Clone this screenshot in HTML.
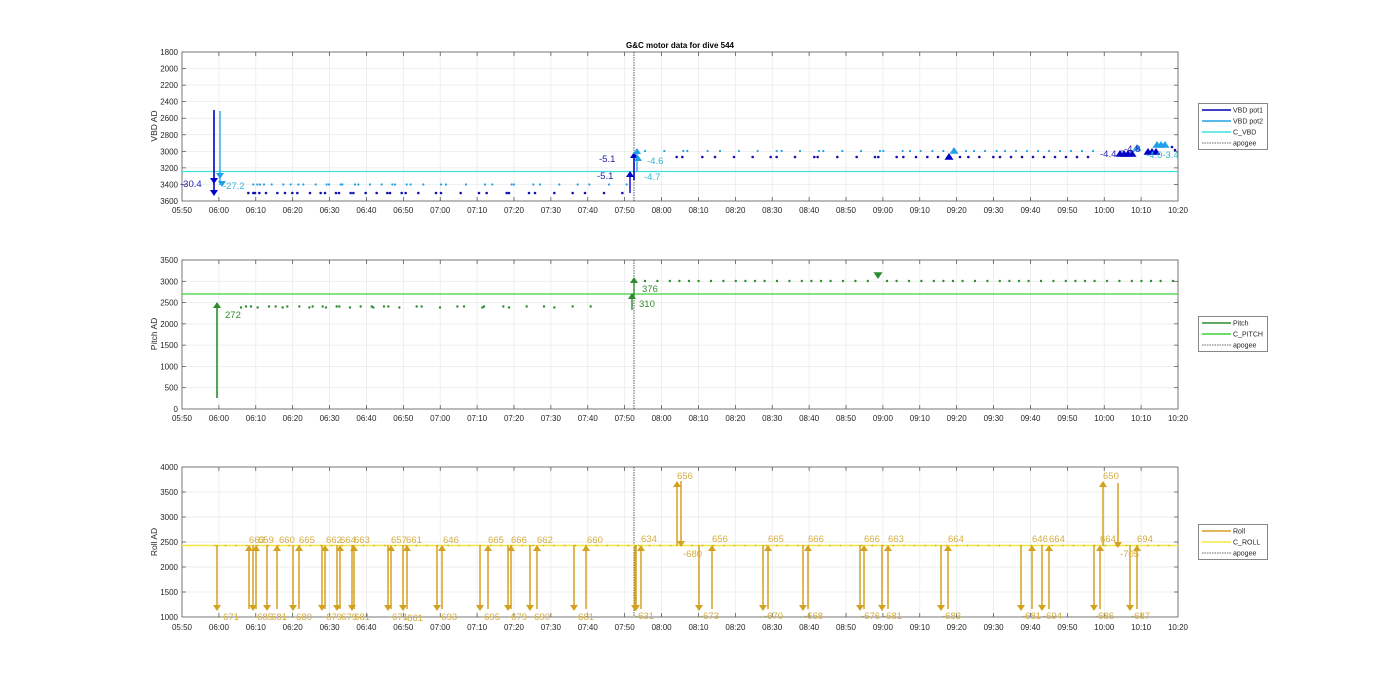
<!DOCTYPE html>
<html><head><meta charset="utf-8"><style>
html,body{margin:0;padding:0;background:#fff;width:1400px;height:693px;overflow:hidden}
svg{display:block;font-family:"Liberation Sans",Arial,sans-serif}
</style></head><body>
<svg id="s" width="1400" height="693" viewBox="0 0 1400 693" xmlns="http://www.w3.org/2000/svg">
<g id="g"></g>
<text x="680" y="48" font-size="8" font-weight="bold" text-anchor="middle" fill="#000">G&amp;C motor data for dive 544</text>
<g font-size="8" fill="#262626" text-anchor="middle">
<text y="213"><tspan x="182">05:50</tspan><tspan x="218.9">06:00</tspan><tspan x="255.8">06:10</tspan><tspan x="292.7">06:20</tspan><tspan x="329.6">06:30</tspan><tspan x="366.4">06:40</tspan><tspan x="403.3">06:50</tspan><tspan x="440.2">07:00</tspan><tspan x="477.1">07:10</tspan><tspan x="514">07:20</tspan><tspan x="550.9">07:30</tspan><tspan x="587.8">07:40</tspan><tspan x="624.7">07:50</tspan><tspan x="661.6">08:00</tspan><tspan x="698.5">08:10</tspan><tspan x="735.4">08:20</tspan><tspan x="772.2">08:30</tspan><tspan x="809.1">08:40</tspan><tspan x="846">08:50</tspan><tspan x="882.9">09:00</tspan><tspan x="919.8">09:10</tspan><tspan x="956.7">09:20</tspan><tspan x="993.6">09:30</tspan><tspan x="1030.5">09:40</tspan><tspan x="1067.4">09:50</tspan><tspan x="1104.3">10:00</tspan><tspan x="1141.1">10:10</tspan><tspan x="1178">10:20</tspan></text>
<text y="421"><tspan x="182">05:50</tspan><tspan x="218.9">06:00</tspan><tspan x="255.8">06:10</tspan><tspan x="292.7">06:20</tspan><tspan x="329.6">06:30</tspan><tspan x="366.4">06:40</tspan><tspan x="403.3">06:50</tspan><tspan x="440.2">07:00</tspan><tspan x="477.1">07:10</tspan><tspan x="514">07:20</tspan><tspan x="550.9">07:30</tspan><tspan x="587.8">07:40</tspan><tspan x="624.7">07:50</tspan><tspan x="661.6">08:00</tspan><tspan x="698.5">08:10</tspan><tspan x="735.4">08:20</tspan><tspan x="772.2">08:30</tspan><tspan x="809.1">08:40</tspan><tspan x="846">08:50</tspan><tspan x="882.9">09:00</tspan><tspan x="919.8">09:10</tspan><tspan x="956.7">09:20</tspan><tspan x="993.6">09:30</tspan><tspan x="1030.5">09:40</tspan><tspan x="1067.4">09:50</tspan><tspan x="1104.3">10:00</tspan><tspan x="1141.1">10:10</tspan><tspan x="1178">10:20</tspan></text>
<text y="630"><tspan x="182">05:50</tspan><tspan x="218.9">06:00</tspan><tspan x="255.8">06:10</tspan><tspan x="292.7">06:20</tspan><tspan x="329.6">06:30</tspan><tspan x="366.4">06:40</tspan><tspan x="403.3">06:50</tspan><tspan x="440.2">07:00</tspan><tspan x="477.1">07:10</tspan><tspan x="514">07:20</tspan><tspan x="550.9">07:30</tspan><tspan x="587.8">07:40</tspan><tspan x="624.7">07:50</tspan><tspan x="661.6">08:00</tspan><tspan x="698.5">08:10</tspan><tspan x="735.4">08:20</tspan><tspan x="772.2">08:30</tspan><tspan x="809.1">08:40</tspan><tspan x="846">08:50</tspan><tspan x="882.9">09:00</tspan><tspan x="919.8">09:10</tspan><tspan x="956.7">09:20</tspan><tspan x="993.6">09:30</tspan><tspan x="1030.5">09:40</tspan><tspan x="1067.4">09:50</tspan><tspan x="1104.3">10:00</tspan><tspan x="1141.1">10:10</tspan><tspan x="1178">10:20</tspan></text>
</g>
<g font-size="8" fill="#262626" text-anchor="end">
<text x="178" y="55">1800</text><text x="178" y="71.6">2000</text><text x="178" y="88.1">2200</text><text x="178" y="104.7">2400</text><text x="178" y="121.2">2600</text><text x="178" y="137.8">2800</text><text x="178" y="154.3">3000</text><text x="178" y="170.9">3200</text><text x="178" y="187.4">3400</text><text x="178" y="204">3600</text>
<text x="178" y="263">3500</text><text x="178" y="284.3">3000</text><text x="178" y="305.6">2500</text><text x="178" y="326.9">2000</text><text x="178" y="348.1">1500</text><text x="178" y="369.4">1000</text><text x="178" y="390.7">500</text><text x="178" y="412">0</text>
<text x="178" y="470">4000</text><text x="178" y="495">3500</text><text x="178" y="520">3000</text><text x="178" y="545">2500</text><text x="178" y="570">2000</text><text x="178" y="595">1500</text><text x="178" y="620">1000</text>
</g>
<g font-size="8.5" fill="#262626" text-anchor="middle">
<text transform="translate(157,126) rotate(-90)">VBD AD</text>
<text transform="translate(157,334) rotate(-90)">Pitch AD</text>
<text transform="translate(157,542) rotate(-90)">Roll AD</text>
</g>
<g font-size="9.5">
<text x="180" y="187" fill="#2020b0">-30.4</text>
<text x="223" y="189" fill="#30b8d8">-27.2</text>
<text x="599" y="162" fill="#2020b0">-5.1</text>
<text x="597" y="179" fill="#2020b0">-5.1</text>
<text x="647" y="164" fill="#30b8d8">-4.6</text>
<text x="644" y="180" fill="#30b8d8">-4.7</text>
<text x="1100" y="157" fill="#2020b0">-4.4-3.7</text>
<text x="1124" y="152" fill="#2020b0">-4.8</text>
<text x="1146" y="158" fill="#30b8d8">-4.0-3.4</text>
</g>
<g font-size="9.5" fill="#2e8b2e">
<text x="225" y="318">272</text><text x="642" y="292">376</text><text x="639" y="307">310</text>
</g>
<g font-size="9.5" fill="#d4ac40">
<text x="249" y="543">663</text><text x="258" y="543">659</text><text x="279" y="543">660</text><text x="299" y="543">665</text><text x="326" y="543">662</text><text x="340" y="543">664</text><text x="354" y="543">663</text><text x="391" y="543">657</text><text x="406" y="543">661</text><text x="443" y="543">646</text><text x="488" y="543">665</text><text x="511" y="543">666</text><text x="537" y="543">662</text><text x="587" y="543">660</text>
<text x="220" y="620">-671</text><text x="254" y="620">-685</text><text x="268" y="620">-681</text><text x="293" y="620">-680</text><text x="323" y="620">-679</text><text x="338" y="620">-679</text><text x="351" y="620">-681</text><text x="389" y="620">-671</text><text x="404" y="621">-661</text><text x="438" y="620">-693</text><text x="481" y="620">-695</text><text x="508" y="620">-679</text><text x="531" y="620">-690</text><text x="575" y="620">-681</text>
<text x="641" y="542">634</text><text x="712" y="542">656</text><text x="768" y="542">665</text><text x="808" y="542">666</text><text x="864" y="542">666</text><text x="888" y="542">663</text><text x="948" y="542">664</text><text x="1032" y="542">646</text><text x="1049" y="542">664</text><text x="1100" y="542">664</text><text x="1137" y="542">694</text>
<text x="677" y="479">656</text><text x="1103" y="479">650</text>
<text x="683" y="557">-680</text><text x="1120" y="557">-705</text>
<text x="635" y="619">-631</text><text x="700" y="619">-673</text><text x="764" y="619">-670</text><text x="804" y="619">-668</text><text x="861" y="619">-676</text><text x="883" y="619">-681</text><text x="942" y="619">-683</text><text x="1022" y="619">-681</text><text x="1043" y="619">-694</text><text x="1095" y="619">-686</text><text x="1131" y="619">-687</text>
</g>
<g font-size="7" fill="#262626">
<rect x="1198.5" y="103.5" width="69" height="46" fill="#fff" stroke="#555" stroke-width="0.7"/>
<line x1="1202" y1="110" x2="1231" y2="110" stroke="#0000b0" stroke-width="1.5"/><text x="1233" y="112.5">VBD pot1</text>
<line x1="1202" y1="121" x2="1231" y2="121" stroke="#20a0e8" stroke-width="1.5"/><text x="1233" y="123.5">VBD pot2</text>
<line x1="1202" y1="132" x2="1231" y2="132" stroke="#40e0e0" stroke-width="1.5"/><text x="1233" y="134.5">C_VBD</text>
<line x1="1202" y1="143" x2="1231" y2="143" stroke="#333" stroke-width="0.7" stroke-dasharray="1.5,1"/><text x="1233" y="145.5">apogee</text>
<rect x="1198.5" y="316.5" width="69" height="35" fill="#fff" stroke="#555" stroke-width="0.7"/>
<line x1="1202" y1="323" x2="1231" y2="323" stroke="#2e8b2e" stroke-width="1.5"/><text x="1233" y="325.5">Pitch</text>
<line x1="1202" y1="334" x2="1231" y2="334" stroke="#3cd03c" stroke-width="1.5"/><text x="1233" y="336.5">C_PITCH</text>
<line x1="1202" y1="345" x2="1231" y2="345" stroke="#333" stroke-width="0.7" stroke-dasharray="1.5,1"/><text x="1233" y="347.5">apogee</text>
<rect x="1198.5" y="524.5" width="69" height="35" fill="#fff" stroke="#555" stroke-width="0.7"/>
<line x1="1202" y1="531" x2="1231" y2="531" stroke="#d4a020" stroke-width="1.5"/><text x="1233" y="533.5">Roll</text>
<line x1="1202" y1="542" x2="1231" y2="542" stroke="#f5e642" stroke-width="1.5"/><text x="1233" y="544.5">C_ROLL</text>
<line x1="1202" y1="553" x2="1231" y2="553" stroke="#333" stroke-width="0.7" stroke-dasharray="1.5,1"/><text x="1233" y="555.5">apogee</text>
</g>
</svg>
<script>
(function(){
var g=document.getElementById('g'),o=[];
function L(x1,y1,x2,y2,c,w,d){o.push('<line x1="'+x1+'" y1="'+y1+'" x2="'+x2+'" y2="'+y2+'" stroke="'+c+'" stroke-width="'+w+'"'+(d?' stroke-dasharray="'+d+'"':'')+'/>');}
function D(x,y,c,r){r=r||1.2;o.push('<circle cx="'+x+'" cy="'+y+'" r="'+r+'" fill="'+c+'"/>');}
function T(x,y,up,c,s){s=s||4;var h=s*1.5;o.push('<polygon points="'+(x-s)+','+(up?y+h:y-h)+' '+(x+s)+','+(up?y+h:y-h)+' '+x+','+y+'" fill="'+c+'"/>');}
function A(x,y1,y2,c,w){L(x,y1,x,y2+(y2<y1?5:-5),c,w||1.5);T(x,y2,y2<y1,c,4);}
var P=[[52,201],[260,409],[467,617]],L0=182,R=1178,dx=(R-L0)/27;
P.forEach(function(p,i){
 var n=[9,7,6][i];
 for(var k=1;k<27;k++){var x=L0+k*dx;L(x,p[0],x,p[1],'#e8e8e8',0.7);}
 for(var k=1;k<n;k++){var y=p[0]+k*(p[1]-p[0])/n;L(L0,y,R,y,'#e8e8e8',0.7);}
 for(var k=1;k<27;k++){var x=L0+k*dx;L(x,p[1],x,p[1]-4,'#444',0.7);L(x,p[0],x,p[0]+4,'#444',0.7);}
 for(var k=1;k<n;k++){var y=p[0]+k*(p[1]-p[0])/n;L(L0,y,L0+4,y,'#444',0.7);L(R,y,R-4,y,'#444',0.7);}
 o.push('<rect x="'+L0+'" y="'+p[0]+'" width="'+(R-L0)+'" height="'+(p[1]-p[0])+'" fill="none" stroke="#555" stroke-width="0.8"/>');
 L(634,p[0],634,p[1],'#333',0.8,'1.5,1');
});
var dk="#1010b0",lb="#20a0e8",cy="#40e0e0";
L(L0,171.5,R,171.5,cy,1.3);
var d1=[325,340,345,358,378,412,435,457,472,510,542,555,588,597,632,640,677,710,742,750,785,797,835,888,903,962,1017,1040,1100,1107,1167,1185,1243,1298,1335,1392,1447];
var c1=[340,352,360,372,395,430,452,475,490,527,560,567,602,607,645,655,690,725,757,765,800,812,850,903,918,978,1035,1057,1115,1122,1180,1200,1258,1313,1348,1407,1460];
d1.forEach(function(p){D(140+p/3,193,dk,1.3)});c1.forEach(function(p){D(140+p/3,184.5,lb,1.1)});
var d2=[290,307,367,405,462,518,572,590,645,703,713,772,830,885,895,950,970,1008,1042,1074,1140,1165,1198,1240];
var c2=[195,253,310,322,383,420,477,533,590,605,660,717,730,787,843,900,910,968,990,1022,1057,1090,1158,1182,1215,1250];
d2.forEach(function(p){D(580+p/3,157,dk,1.3)});c2.forEach(function(p){D(580+p/3,151,lb,1.1)});
for(var x=1000;x<1095;x+=11){D(x,157,dk,1.3);D(x+5,151,lb,1.1);}
D(1172,147,dk,1.3);D(1175,150,dk,1.3);
A(214,110,196,"#0000c8",1.6);T(214,184,false,"#0000c8",4);
L(220,111,220,185,lb,1.3);T(220,179,false,lb,4);T(222,187,false,lb,4);
A(634,180,152,"#0000c8",1.6);A(630,193,171,"#0000c8",1.4);A(637,172,148,lb,1.3);T(638,155,true,lb,4);
T(949,153,true,"#0000c8",4.5);T(954,147,true,lb,4.5);
[1120,1124,1128,1132].forEach(function(x){T(x,150,true,"#0000c8",4.5)});T(1137,144,true,lb,4.5);
[1148,1152,1156].forEach(function(x){T(x,148,true,"#0000c8",4.5)});[1157,1161,1165].forEach(function(x){T(x,141,true,lb,4.5)});
var gd="#2e8b2e";
L(L0,294,R,294,"#3cd03c",1.3);
[303,318,333,353,387,407,428,442,478,508,518,548,558,590,598,630,662,695,700,732,745,778,830,845,900,952,972,1027,1032,1090,1107,1160,1212,1243,1298,1352].forEach(function(p,i){D(140+p/3,307+(i%3==0?0.5:-0.5),gd,1.2)});
for(var x=645;x<1178;x+=(Math.round(x)%3?9.6:12.4)){ if(Math.abs(x-878)>4) D(x,281,gd,1.2);}
A(217,398,302,gd,1.6);A(632,310,293,gd,1.4);A(634,298,277,gd,1.4);T(878,279,false,gd,4.5);
var rl="#d4a020";
L(L0,545.5,R,545.5,"#f5e642",1.5);
for(var x=215;x<1178;x+=10.6){D(x,545.5,rl,0.8);}
[217,253,267,293,322,337,352,388,403,437,480,508,530,574,636,635,699,763,803,860,882,941,1021,1042,1094,1130].forEach(function(x){A(x,545,611,rl,1.5)});
[249,256,277,299,325,340,354,391,407,442,488,511,537,586,641,712,768,808,864,888,948,1032,1049,1100,1137].forEach(function(x){A(x,609,545,rl,1.5)});
A(677,546,481,rl,1.5);A(681,481,547,rl,1.5);A(1103,546,481,rl,1.5);A(1118,483,548,rl,1.5);
g.innerHTML=o.join('');
})();
</script>
</body></html>
